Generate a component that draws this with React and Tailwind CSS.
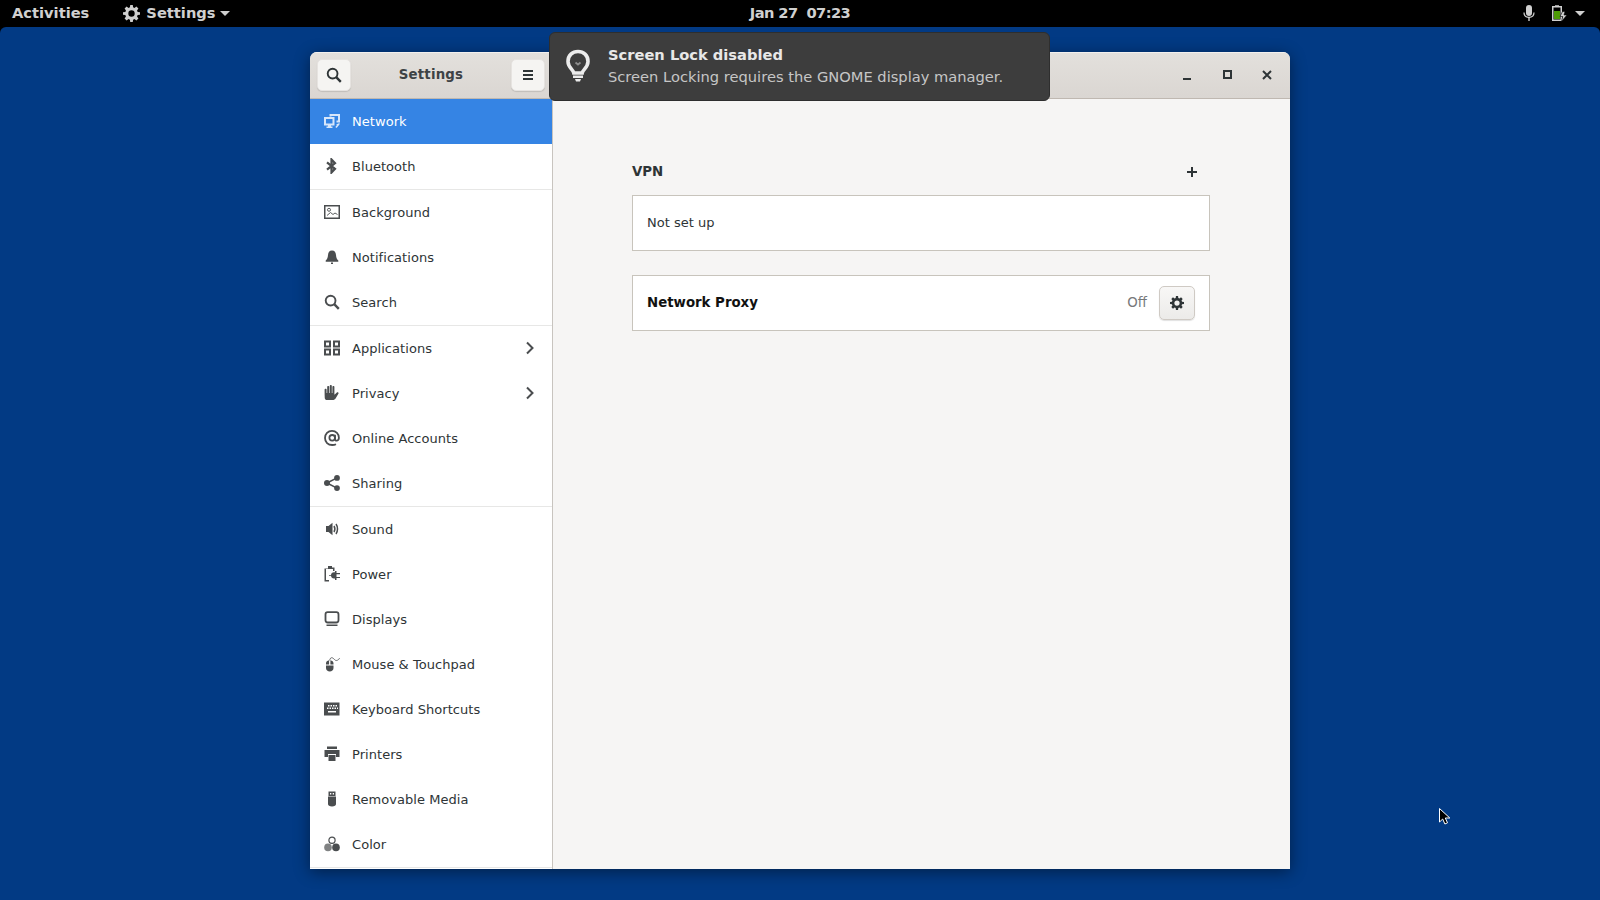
import React from "react";

const S = ({ children, className = "" }) => (
  <svg viewBox="0 0 16 16" width="16" height="16" className={className} fill="currentColor" aria-hidden="true">{children}</svg>
);

const icons = {
  network: (
    <S>
      <path d="M0 4h10.500v8.500H7v1h1.500V15h-6v-1.500H4v-1H0zM2 6v4.500h6.500V6z" fillRule="evenodd" />
      <path d="M5.500 1H16v8.500h-3.500v-2H14V3H7.500v.5h-2z" />
      <path d="M15.500 10v1.500L12.500 15l-1.200-1 1.700-2-1-.5z" />
    </S>
  ),
  bluetooth: (
    <S>
      <path d="M3 4.300 11 10.800 7.500 14.500v-13l3.500 3.700-8 6.500" fill="none" stroke="currentColor" strokeWidth="2.200" />
    </S>
  ),
  background: (
    <S>
      <path fillRule="evenodd" d="M0 1h16v14H0zM1.500 2.500v11h13v-11z" />
      <circle cx="5" cy="5.800" r="1.500" fill="none" stroke="currentColor" strokeWidth="0.900" />
      <path d="M3 11.500 6.500 8.500 9 10.500 11 9l2.500 1.500" fill="none" stroke="currentColor" strokeWidth="0.900" />
    </S>
  ),
  bell: (
    <S>
      <path d="M8 1.500c2.700 0 3.800 1.900 4 4.400.2 2.500.8 4.300 2.300 5.600v1.200H1.700v-1.200C3.200 10.200 3.800 8.400 4 5.900c.2-2.500 1.300-4.400 4-4.400z" />
      <path d="M7 13.500h2V15H7z" />
    </S>
  ),
  search: (
    <S>
      <circle cx="6.600" cy="6.600" r="4.900" fill="none" stroke="currentColor" strokeWidth="1.900" />
      <path d="m10.200 10.200 4.600 4.600" fill="none" stroke="currentColor" strokeWidth="2.400" />
    </S>
  ),
  apps: (
    <S>
      <path fillRule="evenodd" d="M0 .5h7v7H0zM2 2.500v3h3v-3zM9 .5h7v7H9zM11 2.500v3h3v-3zM0 8.500h7v7H0zM2 10.500v3h3v-3zM9 8.500h7v7H9zM11 10.500v3h3v-3z" />
    </S>
  ),
  privacy: (
    <S>
      <path d="M.8 14C.6 11 .6 8 .6 4.500c0-1.100 2-1.100 2 0V8h.6V1.800c0-1.100 2-1.100 2 0V8h.6V.9c0-1.100 2-1.100 2 0V8h.6V1.800c0-1.100 2-1.100 2 0v8c.9-.7 1.500-1.500 2.200-2.100 1-.8 2.400 0 1.800 1-.7 1.300-1.700 2.900-2.500 4.200-.9 1.400-1.900 2.100-3.400 2.100H3c-1.300 0-2.100-.6-2.200-2z" />
    </S>
  ),
  at: (
    <S>
      <circle cx="8.200" cy="7.800" r="2.800" fill="none" stroke="currentColor" strokeWidth="1.800" />
      <path d="M11 4.800v4.400c0 2.200 3.900 2.200 3.900-1.400C14.900 3.800 12 .9 8 .9S1 3.900 1 8s3 7 7.200 7c1.700 0 2.800-.3 3.800-.8" fill="none" stroke="currentColor" strokeWidth="1.800" />
    </S>
  ),
  share: (
    <S>
      <circle cx="3" cy="8" r="3" />
      <circle cx="13" cy="2.900" r="2.900" />
      <circle cx="13" cy="13.100" r="2.900" />
      <path d="M3 8l10-5.100M3 8l10 5.100" fill="none" stroke="currentColor" strokeWidth="1.600" />
    </S>
  ),
  sound: (
    <S>
      <path d="M2 5h2.500L8.500 1.800v12.400L4.500 11H2z" />
      <path d="M10 5c1.100 1.800 1.100 4.200 0 6M12 3c2 2.800 2 7.200 0 10" fill="none" stroke="currentColor" strokeWidth="1.500" />
    </S>
  ),
  power: (
    <S>
      <path d="M4 0h4v1.500h2.500V5H9V3H2v11h3v1.500H.5v-13H4z" />
      <path d="M7 9c0-1.600 1.300-2.800 3-2.800h1V5h1.500v2H16v1.200h-3.500v2.700H16V12h-3.500v2h-1.500v-1.500h-1c-1.700 0-3-1.300-3-2.700H5V9z" />
    </S>
  ),
  displays: (
    <S>
      <rect x="1.500" y="1.200" width="13" height="10.300" rx="2.200" fill="none" stroke="currentColor" strokeWidth="1.800" />
      <path d="M2.500 13.500h11V15h-11z" />
    </S>
  ),
  mouse: (
    <S>
      <path d="M2 9.500h7.500V12c0 2-1.700 3.500-3.750 3.500S2 14 2 12z" />
      <path fillRule="evenodd" d="M5.100 4.200v4.300H2V7.500c0-1.800 1.200-3 3.100-3.300zM6.400 4.200c1.900.3 3.100 1.500 3.100 3.300v1H6.400z" />
      <path d="M5.700 4.500C5.700 2.500 7.200 1 8.800 2s2 2.500 3.500 2.500S15.500 3 15.500 2" fill="none" stroke="currentColor" strokeWidth="0.800" />
    </S>
  ),
  keyboard: (
    <S>
      <path fillRule="evenodd" d="M0 1.500h15.500v13H0zM4 4v1.500h1.500V4zM6.500 4v1.500H8V4zM9 4v1.500h1.500V4zM11.500 4v1.500H13V4zM3 6.500V8h1.500V6.500zM5.500 6.500V8H7V6.500zM8 6.500V8h1.500V6.500zM10.500 6.500V8H12V6.500zM13 6.500V8h1V6.500zM4 10v1.500h8V10z" />
    </S>
  ),
  printer: (
    <S>
      <path d="M3 .5h10v2.500H3zM.5 4h15v7H12V8H4v3H.5z" />
      <path d="M4.500 9h7v6h-7z" />
    </S>
  ),
  media: (
    <S>
      <path fillRule="evenodd" d="M4.500.5h7v4.500h-7zM6 2v1.500h1.300V2zM8.700 2v1.500H10V2z" />
      <path d="M4 5.500h8V13c0 1.500-1.500 2.500-4 2.500S4 14.500 4 13z" />
    </S>
  ),
  color: (
    <S>
      <circle cx="8" cy="4.200" r="3.100" fill="none" stroke="currentColor" strokeWidth="1.200" />
      <circle cx="4" cy="11.400" r="3.800" opacity="0.7" />
      <circle cx="12" cy="11.400" r="3.800" />
    </S>
  ),
};

const Chevron = () => (
  <svg width="10" height="14" viewBox="0 0 10 14" fill="none" className="-mt-[2px]" aria-hidden="true">
    <path d="M2 1.500 7.500 7 2 12.500" stroke="#4a4d4f" strokeWidth="2" />
  </svg>
);

const sections = [
  [
    ["Network", "network"],
    ["Bluetooth", "bluetooth"],
  ],
  [
    ["Background", "background"],
    ["Notifications", "bell"],
    ["Search", "search"],
  ],
  [
    ["Applications", "apps", true],
    ["Privacy", "privacy", true],
    ["Online Accounts", "at"],
    ["Sharing", "share"],
  ],
  [
    ["Sound", "sound"],
    ["Power", "power"],
    ["Displays", "displays"],
    ["Mouse & Touchpad", "mouse"],
    ["Keyboard Shortcuts", "keyboard"],
    ["Printers", "printer"],
    ["Removable Media", "media"],
    ["Color", "color"],
  ],
];

function Row({ label, icon, more }) {
  const active = label === "Network";
  return (
    <div className={`h-[45px] flex items-center pl-[14px] pr-[17px] ${active ? "bg-[#3584e4] text-white" : "text-[#2e3436]"}`}>
      <span className={`w-[28px] flex shrink-0 -mt-[2px] ${active ? "text-[#d7e6fa]" : "text-[#4a4d4f]"}`}>{icons[icon]}</span>
      <span className="flex-1 text-[13px] tracking-[0.05px] leading-none">{label}</span>
      {more && <Chevron />}
    </div>
  );
}

const HeaderButton = ({ children }) => (
  <div className="w-[34px] h-[32px] rounded-[5px] bg-[#f5f4f2] shadow-[0_1px_1px_rgba(0,0,0,0.12)] border border-[#e6e3e0] flex items-center justify-center text-[#2e3436]">
    {children}
  </div>
);

export default function App() {
  return (
    <div className="relative w-[1600px] h-[900px] overflow-hidden bg-black flex flex-col font-['DejaVu_Sans',sans-serif]">
      {/* top panel */}
      <div className="h-[27px] shrink-0 flex items-center text-[#d0d0d0] text-[14.67px] font-bold leading-none">
        <div className="flex-1 flex items-center">
          <span className="ml-[12px]">Activities</span>
          <svg className="ml-[34px]" width="17" height="17" viewBox="0 0 16 16" fill="#cfcfcf" aria-hidden="true">
            <path fillRule="evenodd" d="M6.800 0h2.400l.3 2.200 1.300.6L12.600 1.500l1.900 1.900-1.300 1.800.6 1.300 2.200.3v2.400l-2.200.3-.6 1.300 1.300 1.800-1.900 1.900-1.800-1.300-1.300.6L9.200 16H6.800l-.3-2.200-1.300-.6-1.800 1.300-1.900-1.900 1.300-1.800-.6-1.300L0 9.200V6.800l2.200-.3.6-1.300L1.500 3.400l1.900-1.900 1.800 1.300 1.300-.6zM8 5a3 3 0 1 0 0 6 3 3 0 0 0 0-6z" />
          </svg>
          <span className="ml-[6px]">Settings</span>
          <span className="ml-[4px] w-0 h-0 border-x-[5px] border-x-transparent border-t-[5px] border-t-[#cfcfcf]" />
        </div>
        <span className="tracking-[-0.6px] whitespace-pre">Jan 27  07:23</span>
        <div className="flex-1 flex items-center justify-end">
          <svg width="12" height="17" viewBox="0 0 12 17" aria-hidden="true">
            <rect x="3" y="0" width="6" height="11" rx="3" fill="#d0d0d0" />
            <path d="M1 7.500c0 3 2 4.800 5 4.800s5-1.800 5-4.800" fill="none" stroke="#d0d0d0" strokeWidth="1.200" />
            <path d="M5.300 12h1.400v4H5.300z" fill="#d0d0d0" />
          </svg>
          <svg className="ml-[16px]" width="16" height="17" viewBox="0 0 16 17" aria-hidden="true">
            <path d="M4 1V.2h4V1h3v15H1V1z" fill="#d0d0d0" />
            <path d="M2.500 2.500h7v12h-7z" fill="#000" />
            <path d="M3 6h6v8H3z" fill="#4e9a06" />
            <path d="M11.500 6.500h2.500l-1 3.500h3l-5.500 6.500 1.200-5H9z" fill="#d0d0d0" stroke="#000" strokeWidth="0.600" />
          </svg>
          <span className="ml-[8px] mr-[15px] w-0 h-0 border-x-[5px] border-x-transparent border-t-[5px] border-t-[#cfcfcf]" />
        </div>
      </div>

      {/* desktop */}
      <div className="flex-1 rounded-t-[6px] bg-[#023a84] pl-[310px] pt-[25px]">
        {/* window */}
        <div className="w-[980px] h-[817px] flex flex-col rounded-t-[7px] overflow-hidden bg-[#f6f5f4] shadow-[0_3px_16px_rgba(0,0,0,0.45)]">
          <div className="h-[47px] shrink-0 flex bg-gradient-to-b from-[#e3e0dc] to-[#dad6d2] border-b border-[#bfb8b1] border-t border-t-[#f2f0ee]">
            <div className="w-[243px] shrink-0 flex items-center justify-between pl-[7px] pr-[8px] pb-[2px]">
              <HeaderButton>
                <svg width="16" height="16" viewBox="0 0 16 16" fill="none" aria-hidden="true">
                  <circle cx="6.600" cy="6.600" r="4.900" stroke="#2e3436" strokeWidth="1.900" />
                  <path d="m10.200 10.200 4.600 4.600" stroke="#2e3436" strokeWidth="2.400" />
                </svg>
              </HeaderButton>
              <span className="text-[13.33px] font-bold text-[#3d4245] tracking-[0.2px]">Settings</span>
              <HeaderButton>
                <svg width="12" height="12" viewBox="0 0 12 12" fill="#2e3436" aria-hidden="true">
                  <path d="M1 1h10v2H1zM1 5h10v2H1zM1 9h10v2H1z" />
                </svg>
              </HeaderButton>
            </div>
            <div className="flex-1 flex items-center justify-end pr-[17px] pb-[2px] gap-[28px]">
              <div className="w-[12px] h-[12px] flex items-end justify-center"><div className="w-[8px] h-[2px] mb-[1px] bg-[#2e3436]" /></div>
              <div className="w-[12px] h-[12px] flex items-center justify-center"><div className="w-[9px] h-[9px] border-[2px] border-[#2e3436]" /></div>
              <svg width="12" height="12" viewBox="0 0 12 12" aria-hidden="true">
                <path d="m2 2 8 8M10 2l-8 8" stroke="#2e3436" strokeWidth="2" />
              </svg>
            </div>
          </div>
          <div className="flex-1 min-h-0 flex">
            {/* sidebar */}
            <div className="w-[243px] shrink-0 bg-white border-r border-[#c8c4bf] flex flex-col">
              {sections.map((sec, i) => (
                <div key={i} className="border-b border-[#e7e7e6]">
                  {sec.map(([l, ic, m]) => (
                    <Row key={l} label={l} icon={ic} more={m} />
                  ))}
                </div>
              ))}
            </div>
            {/* content */}
            <div className="flex-1 pl-[79px] pt-[51px] text-[13px]">
              <div className="w-[578px]">
                <div className="h-[45px] flex items-start justify-between pr-[12px]">
                  <span className="font-bold text-[13.33px] text-[#2e3436] leading-[44px]">VPN</span>
                  <svg width="12" height="12" viewBox="0 0 12 12" fill="#2e3436" className="mt-[16px]" aria-hidden="true">
                    <path d="M5 1h2v4h4v2H7v4H5V7H1V5h4z" />
                  </svg>
                </div>
                <div className="h-[56px] bg-white border border-[#c8c4bc] flex items-center pl-[14px] text-[#2e3436]">Not set up</div>
                <div className="mt-[24px] h-[56px] bg-white border border-[#c8c4bc] flex items-center pl-[14px] pr-[14px] text-[#111]">
                  <span className="flex-1 font-bold text-[13.33px]">Network Proxy</span>
                  <span className="text-[13.33px] text-[#77797a] mr-[12px]">Off</span>
                  <div className="w-[36px] h-[34px] rounded-[5px] border border-[#cfcac4] bg-gradient-to-b from-[#f8f7f6] to-[#ecebe9] shadow-[0_1px_1px_rgba(0,0,0,0.12)] flex items-center justify-center">
                    <svg width="14" height="14" viewBox="0 0 16 16" fill="#2e3436" aria-hidden="true">
                      <path fillRule="evenodd" d="M6.800 0h2.400l.3 2.200 1.300.6L12.600 1.500l1.900 1.900-1.300 1.800.6 1.300 2.200.3v2.400l-2.200.3-.6 1.300 1.300 1.800-1.900 1.900-1.800-1.300-1.300.6L9.200 16H6.800l-.3-2.200-1.300-.6-1.800 1.300-1.900-1.900 1.300-1.800-.6-1.300L0 9.200V6.800l2.200-.3.6-1.300L1.500 3.400l1.900-1.900 1.800 1.300 1.300-.6zM8 5a3 3 0 1 0 0 6 3 3 0 0 0 0-6z" />
                    </svg>
                  </div>
                </div>
              </div>
            </div>
          </div>
        </div>
      </div>

      {/* notification banner */}
      <div className="absolute left-[549px] top-[32px] w-[501px] h-[69px] rounded-[6px] bg-[#3d3d3d] border border-[#2e2e2e] flex items-center text-[#e8e8e8]">
        <svg className="ml-[15px] shrink-0 -mt-[2px]" width="26" height="34" viewBox="0 0 26 34" fill="none" aria-hidden="true">
          <path d="M8.800 24C8.300 20.500 3 18.500 3 12.500 3 6.300 7.500 2.500 13 2.500s10 3.800 10 10c0 6-5.300 8-5.800 11.500z" stroke="#ececec" strokeWidth="3.600" />
          <path d="m10.500 13.500 2.500 2 2.500-2" stroke="#8d8d8d" strokeWidth="1.800" />
          <path d="M8 26.500h10v2.500H8zM10 30h6l-1 2.500h-4z" fill="#ececec" />
        </svg>
        <div className="ml-[17px] pb-[1px]">
          <div className="text-[14.67px] font-bold leading-[22px]">Screen Lock disabled</div>
          <div className="text-[14.67px] leading-[22px] text-[#c6c6c6]">Screen Locking requires the GNOME display manager.</div>
        </div>
      </div>

      {/* mouse pointer */}
      <svg className="absolute left-[1439px] top-[808px]" width="12" height="18" viewBox="0 0 12 18" aria-hidden="true">
        <path d="M.5.500V14l3.200-3 2.200 5 2.600-1.200-2.200-4.800h4.500z" fill="#000" stroke="#fff" strokeWidth="1" />
      </svg>
    </div>
  );
}
